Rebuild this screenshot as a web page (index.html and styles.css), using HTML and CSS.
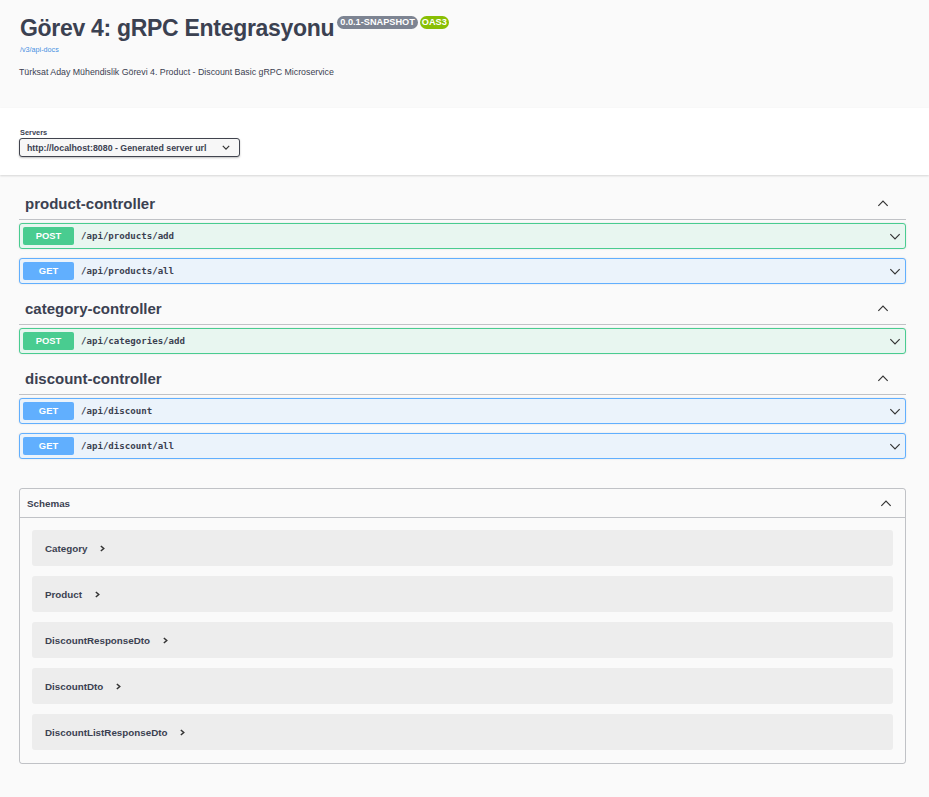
FILE: index.html
```html
<!DOCTYPE html>
<html lang="tr">
<head>
<meta charset="utf-8">
<title>Görev 4: gRPC Entegrasyonu</title>
<link rel="stylesheet" href="styles.css">
</head>
<body>
<div class="page">
  <header class="info">
    <div class="title-row">
      <h2 class="title">Görev 4: gRPC Entegrasyonu</h2>
      <span class="badge version">0.0.1-SNAPSHOT</span>
      <span class="badge oas">OAS3</span>
    </div>
    <a class="url" href="#">/v3/api-docs</a>
    <p class="desc">Türksat Aday Mühendislik Görevi 4. Product - Discount Basic gRPC Microservice</p>
  </header>

  <section class="schemes">
    <div class="servers">
      <span class="servers-label">Servers</span>
      <div class="select">
        <span>http://localhost:8080 - Generated server url</span>
        <svg class="sel-arrow" viewBox="0 0 10 6" width="8" height="5"><polyline points="1,1 5,5 9,1" fill="none" stroke="#333" stroke-width="1.5"/></svg>
      </div>
    </div>
  </section>

  <main class="ops">
    <section class="tag-section">
      <div class="tag">
        <h3>product-controller</h3>
        <svg class="chev" viewBox="0 0 20 12" width="12" height="7"><polyline points="2,10 10,2 18,10" fill="none" stroke="#333" stroke-width="2"/></svg>
      </div>
      <div class="op post">
        <span class="method">POST</span><span class="path">/api/products/add</span>
        <svg class="chev" viewBox="0 0 20 12" width="12" height="7"><polyline points="2,2 10,10 18,2" fill="none" stroke="#333" stroke-width="2"/></svg>
      </div>
      <div class="op get">
        <span class="method">GET</span><span class="path">/api/products/all</span>
        <svg class="chev" viewBox="0 0 20 12" width="12" height="7"><polyline points="2,2 10,10 18,2" fill="none" stroke="#333" stroke-width="2"/></svg>
      </div>
    </section>

    <section class="tag-section">
      <div class="tag">
        <h3>category-controller</h3>
        <svg class="chev" viewBox="0 0 20 12" width="12" height="7"><polyline points="2,10 10,2 18,10" fill="none" stroke="#333" stroke-width="2"/></svg>
      </div>
      <div class="op post">
        <span class="method">POST</span><span class="path">/api/categories/add</span>
        <svg class="chev" viewBox="0 0 20 12" width="12" height="7"><polyline points="2,2 10,10 18,2" fill="none" stroke="#333" stroke-width="2"/></svg>
      </div>
    </section>

    <section class="tag-section">
      <div class="tag">
        <h3>discount-controller</h3>
        <svg class="chev" viewBox="0 0 20 12" width="12" height="7"><polyline points="2,10 10,2 18,10" fill="none" stroke="#333" stroke-width="2"/></svg>
      </div>
      <div class="op get">
        <span class="method">GET</span><span class="path">/api/discount</span>
        <svg class="chev" viewBox="0 0 20 12" width="12" height="7"><polyline points="2,2 10,10 18,2" fill="none" stroke="#333" stroke-width="2"/></svg>
      </div>
      <div class="op get">
        <span class="method">GET</span><span class="path">/api/discount/all</span>
        <svg class="chev" viewBox="0 0 20 12" width="12" height="7"><polyline points="2,2 10,10 18,2" fill="none" stroke="#333" stroke-width="2"/></svg>
      </div>
    </section>
  </main>

  <section class="models">
    <div class="models-head">
      <h4>Schemas</h4>
      <svg class="chev" viewBox="0 0 20 12" width="12" height="7"><polyline points="2,10 10,2 18,10" fill="none" stroke="#333" stroke-width="2"/></svg>
    </div>
    <div class="models-body">
      <div class="model"><span>Category</span><svg class="mchev" viewBox="0 0 6 8" width="5" height="7"><polyline points="1,1 4.5,4 1,7" fill="none" stroke="#333" stroke-width="1.8"/></svg></div>
      <div class="model"><span>Product</span><svg class="mchev" viewBox="0 0 6 8" width="5" height="7"><polyline points="1,1 4.5,4 1,7" fill="none" stroke="#333" stroke-width="1.8"/></svg></div>
      <div class="model"><span>DiscountResponseDto</span><svg class="mchev" viewBox="0 0 6 8" width="5" height="7"><polyline points="1,1 4.5,4 1,7" fill="none" stroke="#333" stroke-width="1.8"/></svg></div>
      <div class="model"><span>DiscountDto</span><svg class="mchev" viewBox="0 0 6 8" width="5" height="7"><polyline points="1,1 4.5,4 1,7" fill="none" stroke="#333" stroke-width="1.8"/></svg></div>
      <div class="model"><span>DiscountListResponseDto</span><svg class="mchev" viewBox="0 0 6 8" width="5" height="7"><polyline points="1,1 4.5,4 1,7" fill="none" stroke="#333" stroke-width="1.8"/></svg></div>
    </div>
  </section>
</div>
</body>
</html>
```

FILE: styles.css
```css
* { box-sizing: border-box; }

html, body {
  margin: 0;
  padding: 0;
  background: #fafafa;
  font-family: "Liberation Sans", Arial, sans-serif;
  color: #3b4151;
}

.page {
  padding-bottom: 30px;
}

/* ---------- info ---------- */
.info {
  padding: 14px 23px 30px 19px;
}

.title-row {
  display: flex;
  align-items: flex-start;
}

.title {
  margin: 0;
  font-size: 23px;
  line-height: 29px;
  font-weight: 700;
  letter-spacing: -0.3px;
  color: #3b4151;
  padding-left: 1px;
}

.badge {
  display: inline-block;
  margin-top: 2px;
  height: 13px;
  line-height: 13px;
  padding: 0 3px;
  border-radius: 7px;
  font-size: 9.2px;
  font-weight: 700;
  color: #fff;
}

.badge.version {
  margin-left: 3px;
  background: #7d8492;
}

.badge.oas {
  margin-left: 2px;
  padding: 0 2px;
  background: #89bf04;
}

.url {
  display: block;
  margin-top: 2px;
  font-size: 7.2px;
  line-height: 10px;
  color: #4990e2;
  text-decoration: none;
  padding-left: 1px;
}

.desc {
  margin: 11px 0 0;
  font-size: 8.8px;
  line-height: 12px;
  color: #3b4151;
}

/* ---------- servers ---------- */
.schemes {
  background: #fff;
  box-shadow: 0 1px 2px 0 rgba(0, 0, 0, 0.15);
  padding: 20px 23px 18px 19px;
}

.servers {
  display: flex;
  flex-direction: column;
  align-items: flex-start;
}

.servers-label {
  font-size: 7.4px;
  line-height: 9px;
  font-weight: 700;
  padding-left: 1px;
  color: #3b4151;
}

.select {
  margin-top: 1px;
  width: 221px;
  height: 19px;
  display: flex;
  align-items: center;
  justify-content: space-between;
  padding: 0 9px 0 7px;
  border: 1px solid #41444e;
  border-radius: 3px;
  background: #f7f7f7;
  box-shadow: 0 1px 2px 0 rgba(0, 0, 0, 0.25);
  font-size: 8.8px;
  font-weight: 700;
  color: #3b4151;
}

/* ---------- operations ---------- */
.ops {
  padding: 13px 23px 0 19px;
}

.tag {
  height: 32px;
  display: flex;
  align-items: center;
  justify-content: space-between;
  padding: 0 17px 0 6px;
  border-bottom: 1px solid rgba(59, 65, 81, 0.3);
  margin-bottom: 3px;
}

.tag h3 {
  margin: 0;
  font-size: 15px;
  font-weight: 700;
  color: #3b4151;
}

.op {
  height: 26px;
  display: flex;
  align-items: center;
  padding: 0 4px 0 3px;
  border: 1px solid;
  border-radius: 3px;
  margin-bottom: 9px;
  box-shadow: 0 0 2px rgba(0, 0, 0, 0.12);
}

.op.post {
  background: #e8f6f0;
  border-color: #49cc90;
}

.op.get {
  background: #ebf3fb;
  border-color: #61affe;
}

.method {
  width: 51px;
  height: 18px;
  line-height: 18px;
  text-align: center;
  border-radius: 2px;
  color: #fff;
  font-size: 9.4px;
  font-weight: 700;
}

.post .method { background: #49cc90; }
.get .method { background: #61affe; }

.path {
  flex: 1;
  margin-left: 7px;
  font-family: "DejaVu Sans Mono", "Liberation Mono", monospace;
  font-size: 9.1px;
  font-weight: 700;
  color: #3b4151;
}

/* ---------- schemas ---------- */
.models {
  margin: 29px 23px 0 19px;
  border: 1px solid rgba(59, 65, 81, 0.3);
  border-radius: 3px;
}

.models-head {
  height: 29px;
  display: flex;
  align-items: center;
  justify-content: space-between;
  padding: 0 13px 0 7px;
  border-bottom: 1px solid rgba(59, 65, 81, 0.3);
}

.models-head h4 {
  margin: 0;
  font-size: 9.8px;
  font-weight: 700;
  color: #3b4151;
}

.models-body {
  padding: 12px 12px 13px;
  display: flex;
  flex-direction: column;
  gap: 10px;
}

.model {
  height: 36px;
  display: flex;
  align-items: center;
  gap: 13px;
  padding-left: 13px;
  background: #ededed;
  border-radius: 3px;
  font-size: 9.8px;
  font-weight: 700;
  color: #3b4151;
}

.mchev { margin-top: 1px; }
```
